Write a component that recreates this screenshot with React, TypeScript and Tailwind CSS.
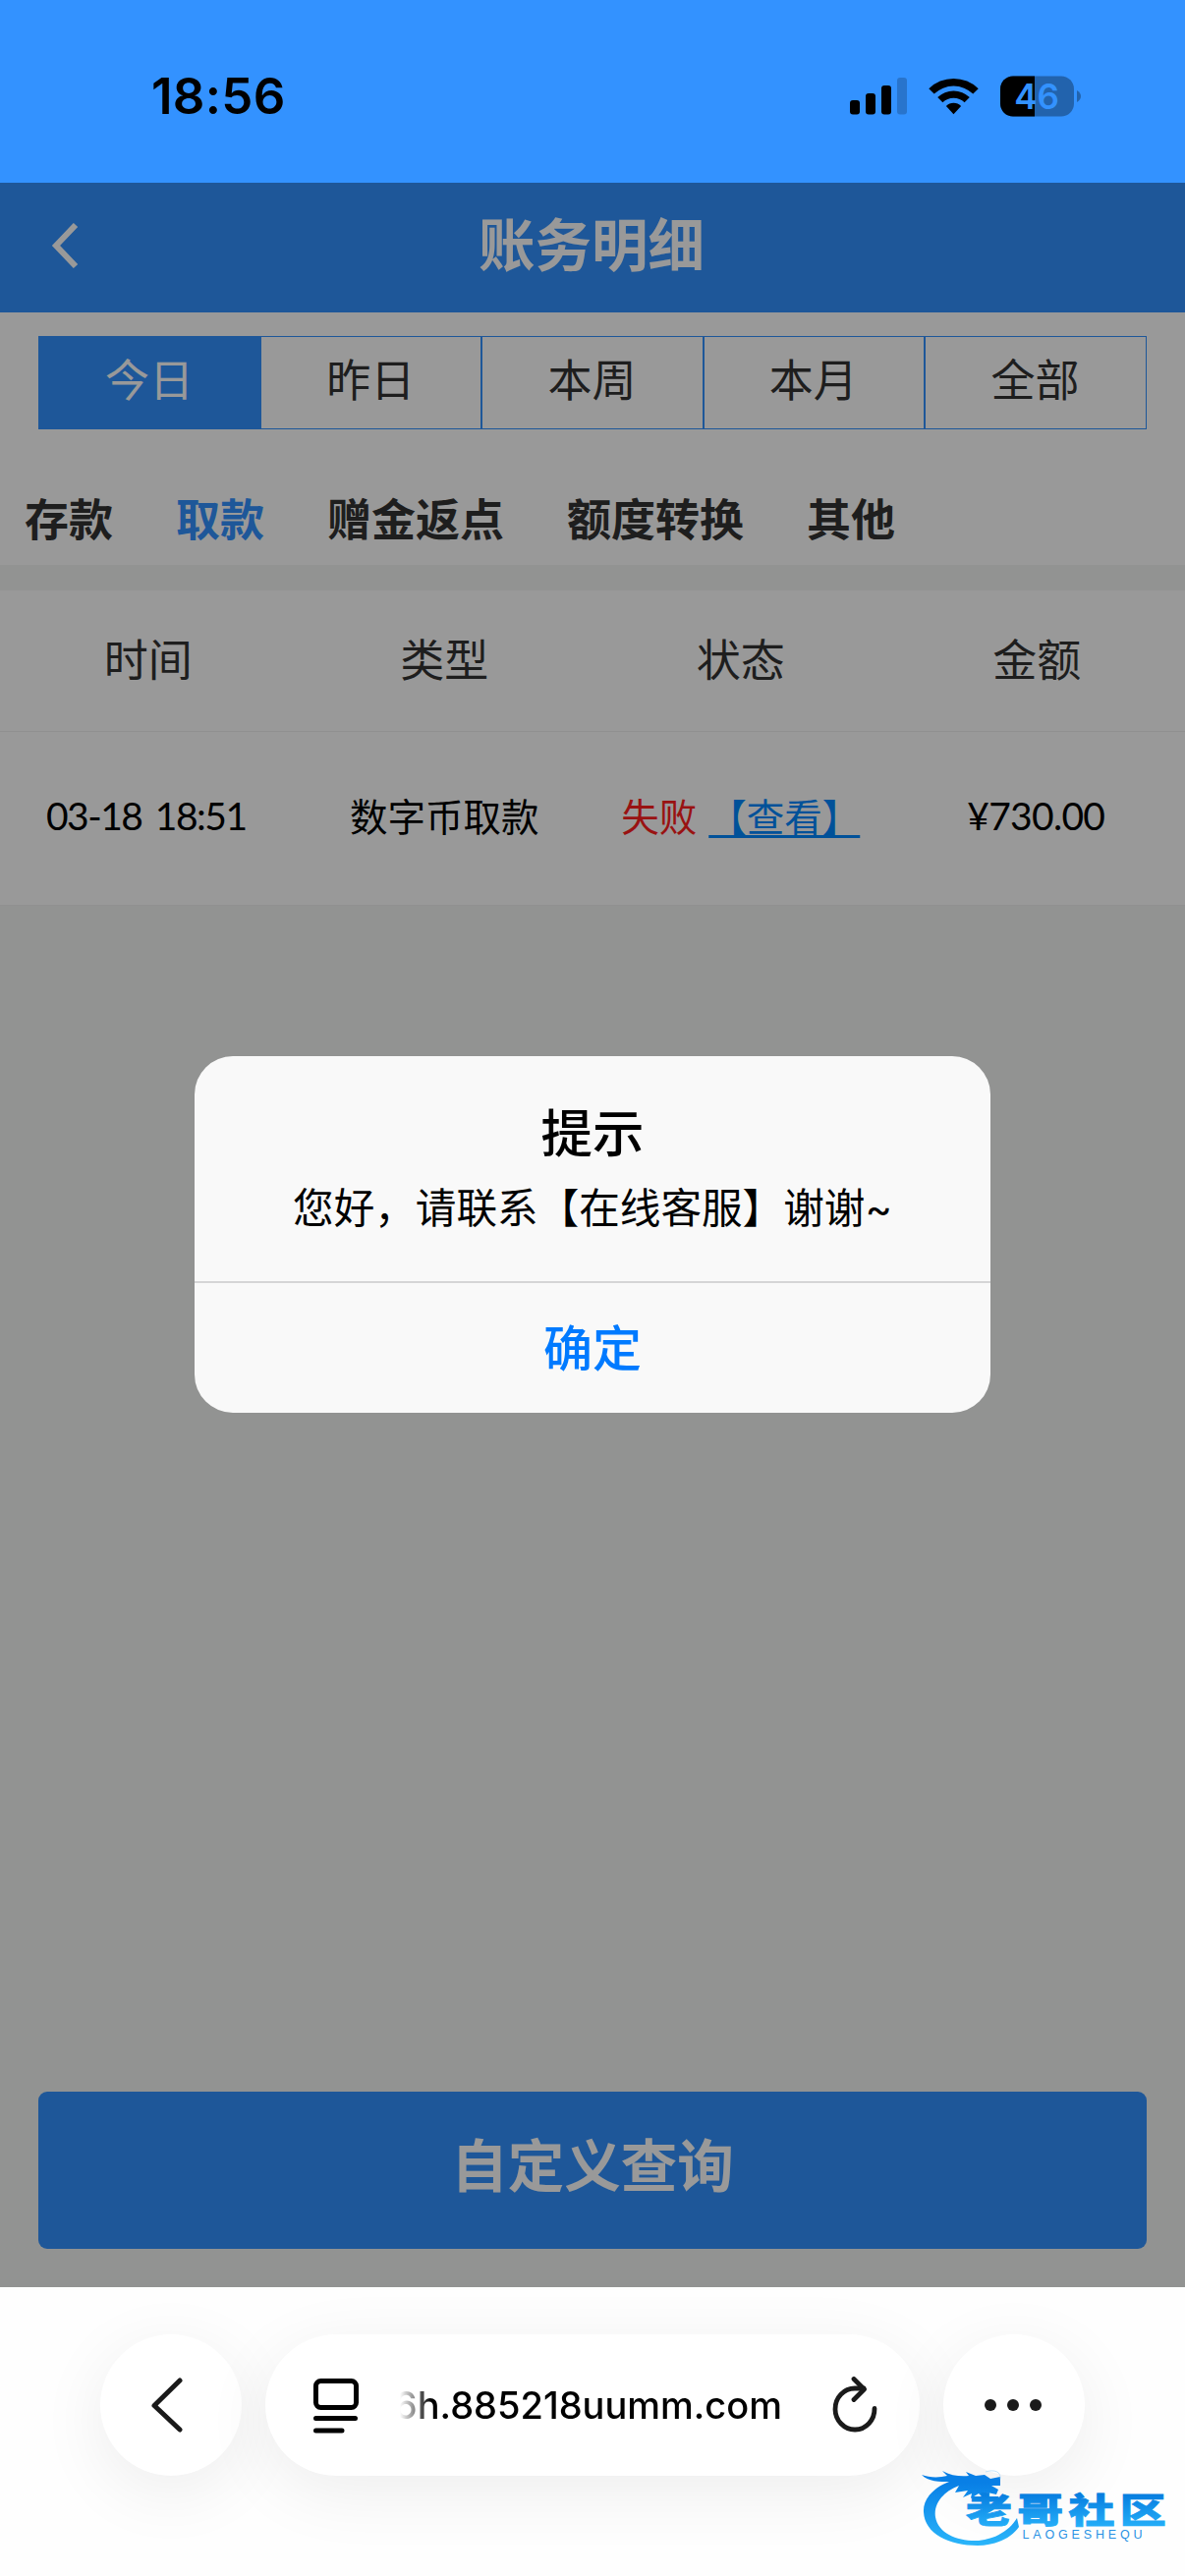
import { useState } from "react";

const ranges = ["今日", "昨日", "本周", "本月", "全部"];
const categories = ["存款", "取款", "赠金返点", "额度转换", "其他"];
const columns = ["时间", "类型", "状态", "金额"];

function StatusBar() {
    return (
        <div className="h-[186px] shrink-0 bg-[#3392ff] flex justify-between pt-[67px] pl-[154px] pr-[105px]">
            <span className="font-['Inter',sans-serif] font-semibold text-[51px] leading-[62px] h-[62px] tracking-[0.3px]">18:56</span>
            <div className="flex gap-[22px] h-[62px] items-center">
                <svg width="58" height="38" viewBox="0 0 58 38">
                    <rect x="0" y="23" width="10" height="14.5" rx="3" />
                    <rect x="16" y="16" width="10" height="21.5" rx="3" />
                    <rect x="32" y="8" width="10" height="29.5" rx="3" />
                    <rect x="48" y="0" width="10" height="37.5" rx="3" opacity="0.2" />
                </svg>
                <svg width="51" height="38" viewBox="0 0 51 38">
                    <path d="M0.3 11.2 A36 36 0 0 1 50.7 11.2 L45.3 16.6 A28.5 28.5 0 0 0 5.7 16.6 Z" />
                    <path d="M9.2 20.1 A23.2 23.2 0 0 1 41.8 20.1 L36.6 25.3 A15.8 15.8 0 0 0 14.4 25.3 Z" />
                    <path d="M17.9 28.9 A10.8 10.8 0 0 1 33.1 28.9 L25.5 37.3 Z" />
                </svg>
                <svg width="83" height="42" viewBox="0 0 83 42">
                    <defs>
                        <clipPath id="level">
                            <rect x="0" y="0" width="35" height="42" />
                        </clipPath>
                    </defs>
                    <rect x="0" y="0.5" width="75" height="41" rx="13" opacity="0.32" />
                    <rect x="0" y="0.5" width="75" height="41" rx="13" clipPath="url(#level)" />
                    <path d="M78 15 Q82 17.5 82 21 Q82 24.5 78 27 Z" opacity="0.32" />
                    <text x="37" y="33.5" textAnchor="middle" fontFamily="Inter, sans-serif" fontWeight="600" fontSize="35" fill="#3392ff">46</text>
                </svg>
            </div>
        </div>
    );
}

function PageHeader() {
    return (
        <header className="h-[132px] shrink-0 bg-[#3392ff] text-white grid grid-cols-[1fr_auto_1fr] items-center px-[52px]">
            <svg className="-mt-1" width="28" height="46" viewBox="0 0 28 46" fill="none" stroke="currentColor" strokeWidth="6">
                <path d="M25 2 L5 23 L25 44" />
            </svg>
            <h1 className="font-bold text-[57.5px] leading-none -ml-0.5 pb-[3px]">账务明细</h1>
        </header>
    );
}

function RangeTabs() {
    const [active, setActive] = useState("今日");
    return (
        <div className="mx-[39px] mt-6 h-[95px] grid grid-cols-5 border border-[#3392ff]">
            {ranges.map((item, i) => (
                <button
                    key={item}
                    onClick={() => setActive(item)}
                    className={`text-[45px] leading-[88px] pb-[3px] ${i < 4 ? "border-r-2 border-[#3392ff] -mr-px" : ""} ${
                        item === active ? "bg-[#3392ff] text-white" : "text-[#333]"
                    }`}
                >
                    {item}
                </button>
            ))}
        </div>
    );
}

function CategoryTabs() {
    return (
        <nav className="h-[138px] flex gap-[64px] pl-[25px] pt-[69px] text-[45px] leading-[48px] font-bold text-[#333]">
            {categories.map((item) => (
                <span key={item} className={item === "取款" ? "text-[#3392ff]" : ""}>
                    {item}
                </span>
            ))}
        </nav>
    );
}

function Records() {
    return (
        <div className="bg-white">
            <div className="h-[144px] grid grid-cols-4 text-center items-center text-[45px] text-[#333] border-b border-[#f0f0f0]">
                {columns.map((item) => (
                    <span key={item}>{item}</span>
                ))}
            </div>
            <div className="h-[177px] grid grid-cols-4 text-center items-center text-[38.5px] whitespace-nowrap border-b border-[#f0f0f0]">
                <span className="font-['Lato','Noto_Sans_CJK_SC',sans-serif] text-[39px] tracking-[-1.5px] [word-spacing:5px] pb-[5px] pr-1">03-18 18:51</span>
                <span>数字币取款</span>
                <span className="flex justify-center gap-[12px]">
                    <span className="text-[#ff1e1e]">失败</span>
                    <a className="text-[#0088ff] underline decoration-[3px] underline-offset-[4px] [text-decoration-skip-ink:none]">【查看】</a>
                </span>
                <span className="font-['Lato','Noto_Sans_CJK_SC',sans-serif] text-[39px] tracking-[-0.7px] pb-[5px] pr-0.5">¥730.00</span>
            </div>
        </div>
    );
}

function AlertDialog() {
    return (
        <div className="absolute inset-0 bg-black/40 flex justify-center items-start pt-[889px]">
            <div className="w-[810px] h-[363px] rounded-[39px] bg-[#f9f9f9] flex flex-col text-center overflow-hidden">
                <div className="h-[231px] border-b-2 border-[#d5d5d6] pt-[48px]">
                    <h2 className="text-[52.5px] leading-[63px] font-medium">提示</h2>
                    <p className="text-[41.6px] leading-[60px] mt-[14px] whitespace-nowrap">您好，请联系【在线客服】谢谢~</p>
                </div>
                <button className="flex-1 text-[50px] font-medium text-[#007aff] pt-[3px]">确定</button>
            </div>
        </div>
    );
}

function BrowserBar() {
    return (
        <footer className="h-[294px] shrink-0 bg-[#fefefe] flex gap-6 pt-12 px-[102px] font-['Inter',sans-serif]">
            <button className="w-36 h-36 rounded-full bg-white shadow-[0_16px_70px_rgba(0,0,0,0.07)] flex items-center justify-center">
                <svg className="mr-[9px]" width="34" height="56" viewBox="0 0 34 56" fill="none" stroke="#1a1a1a" strokeWidth="5" strokeLinecap="round" strokeLinejoin="round">
                    <path d="M30 3 L4 28.5 L30 53" />
                </svg>
            </button>
            <div className="w-[666px] h-36 rounded-full bg-white shadow-[0_16px_70px_rgba(0,0,0,0.07)] flex items-center pl-[48px] pr-[42px]">
                <svg className="shrink-0" width="48" height="58" viewBox="0 0 48 58" fill="none" stroke="#000" strokeWidth="5" strokeLinecap="round">
                    <rect x="3.5" y="4.5" width="41" height="27" rx="5" />
                    <path d="M3.5 42.5 H43.5 M3.5 55 H30" />
                </svg>
                <div className="ml-[41px] w-[389px] flex justify-end overflow-hidden whitespace-nowrap [mask-image:linear-gradient(to_right,transparent,black_32px)]">
                    <span className="text-[38px] font-medium leading-[48px]">6h.885218uumm.com</span>
                </div>
                <svg className="ml-auto shrink-0" width="48" height="58" viewBox="0 0 48 58" fill="none" stroke="#1a1a1a" strokeWidth="4.8" strokeLinecap="round" strokeLinejoin="round">
                    <path d="M44 32.5 A20 21 0 1 1 24 12 H33" />
                    <path d="M23 2.5 L33.5 13 L23 23.5" />
                </svg>
            </div>
            <button className="w-36 h-36 rounded-full bg-white shadow-[0_16px_70px_rgba(0,0,0,0.07)] flex items-center justify-center gap-[11px] pr-0.5">
                <span className="w-3 h-3 rounded-full bg-[#1a1a1a]" />
                <span className="w-3 h-3 rounded-full bg-[#1a1a1a]" />
                <span className="w-3 h-3 rounded-full bg-[#1a1a1a]" />
            </button>
        </footer>
    );
}

function CommunityLogo() {
    return (
        <svg className="absolute left-[936px] top-[2506px]" width="256" height="90" viewBox="0 0 256 90">
            <defs>
                <linearGradient id="brand" x1="0" y1="4" x2="0" y2="88" gradientUnits="userSpaceOnUse">
                    <stop offset="0.2" stopColor="#087fe6" />
                    <stop offset="1" stopColor="#2cb8fb" />
                </linearGradient>
                <linearGradient id="brandText" x1="0" y1="34" x2="0" y2="68" gradientUnits="userSpaceOnUse">
                    <stop offset="0" stopColor="#087fe0" />
                    <stop offset="1" stopColor="#27b2fa" />
                </linearGradient>
            </defs>
            {/* dragon body and head */}
            <path
                fill="url(#brand)"
                d="M40 24 C22 31 14 44 16 56 C19 73 39 81 60 80 C78 78 92 69 99 57 L101 66 C93 78 76 85 59 85 C30 85 5 73 4 51 C3 38 14 26 30 20 C21 20 8 20 2 13 C10 16 20 16 28 14 L23 9 C32 14 42 15 50 14 L47 10 L57 14 L66 13 L72 17 L82 15 L82 24 L73 24 L80 28 L78 33 L69 31 L63 35 L60 32 L52 37 L53 32 L44 36 L49 29 L36 31 Z"
            />
            <path d="M67 10 C76 7 83 10 82 17" fill="none" stroke="#9fd3f8" strokeWidth="1" opacity="0.6" />
            <text
                transform="scale(1.34 1)"
                x="35"
                y="62.5"
                fontFamily="'Noto Sans CJK SC', sans-serif"
                fontWeight="900"
                fontSize="35"
                textLength="152"
                fill="url(#brandText)"
                stroke="url(#brandText)"
                strokeWidth="0.8"
            >
                老哥社区
            </text>
            <text x="104.5" y="77.5" fontFamily="'Liberation Sans', sans-serif" fontSize="12.5" textLength="122" fill="#2a92e4">
                LAOGESHEQU
            </text>
        </svg>
    );
}

export default function App() {
    return (
        <div className="relative w-[1206px] h-[2622px] flex flex-col overflow-hidden text-black font-['Inter','Noto_Sans_CJK_SC',sans-serif]">
            <StatusBar />
            <main className="relative h-[2142px] shrink-0 flex flex-col bg-[#f3f5f4]">
                <PageHeader />
                <section className="bg-white h-[257px]">
                    <RangeTabs />
                    <CategoryTabs />
                </section>
                <section className="mt-[26px]">
                    <Records />
                </section>
                <button className="mt-auto mx-[39px] mb-[39px] h-[160px] rounded-[9px] bg-[#3392ff] text-white text-[57.5px] font-bold leading-none pb-[6px]">
                    自定义查询
                </button>
                <AlertDialog />
            </main>
            <BrowserBar />
            <CommunityLogo />
        </div>
    );
}
